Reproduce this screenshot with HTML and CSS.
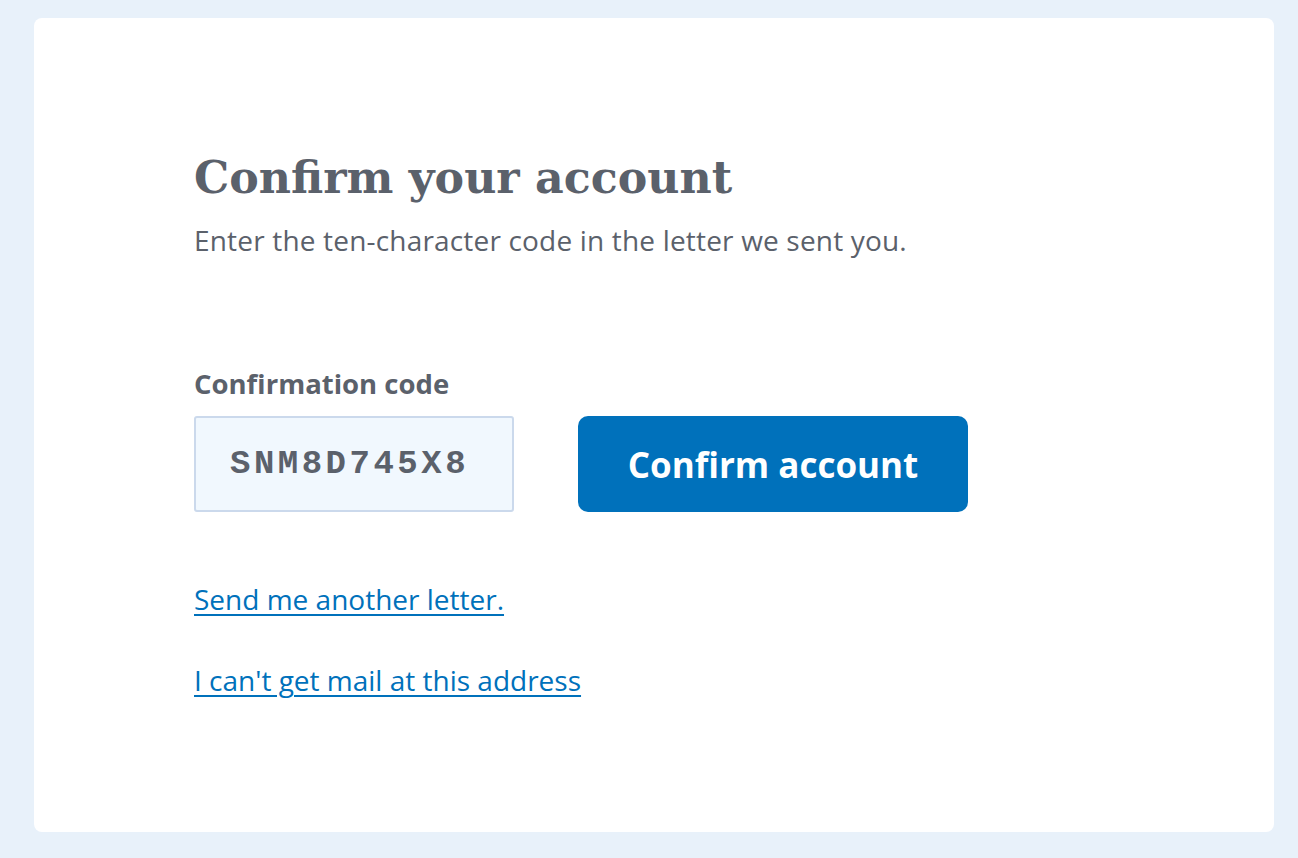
FILE: index.html
```html
<!DOCTYPE html>
<html lang="en">
<head>
<meta charset="utf-8">
<title>Confirm your account</title>
<link rel="stylesheet" href="styles.css">
</head>
<body>
<main class="card">
  <h1 class="title">Confirm your account</h1>
  <p class="lead">Enter the ten-character code in the letter we sent you.</p>
  <form class="form">
    <label class="label" for="code">Confirmation code</label>
    <div class="row">
      <input class="code" id="code" type="text" value="SNM8D745X8">
      <button class="btn" type="button">Confirm account</button>
    </div>
  </form>
  <p class="link-row"><a class="link" href="#">Send me another letter.</a></p>
  <p class="link-row"><a class="link" href="#">I can't get mail at this address</a></p>
</main>
</body>
</html>
```

FILE: styles.css
```css
html, body {
  margin: 0;
  padding: 0;
}
body {
  background: #e8f1fa;
  padding: 18px 24px 26px 34px;
  font-family: "Open Sans", "Liberation Sans", sans-serif;
  color: #5b616b;
  box-sizing: border-box;
  height: 858px;
}
.card {
  background: #ffffff;
  border-radius: 8px;
  height: 814px;
  box-sizing: border-box;
  padding: 133px 160px 0 160px;
}
.title {
  margin: 0;
  font-family: "DejaVu Serif", serif;
  font-weight: bold;
  font-size: 44.3px;
  line-height: 52px;
  color: #5b616b;
}
.lead {
  margin: 19px 0 0;
  font-size: 28px;
  line-height: 36px;
  letter-spacing: 0.18px;
}
.form {
  margin-top: 108px;
}
.label {
  display: block;
  font-weight: bold;
  font-size: 27.5px;
  line-height: 36px;
}
.row {
  display: flex;
  gap: 64px;
  margin-top: 14px;
}
.code {
  width: 320px;
  height: 96px;
  box-sizing: border-box;
  border: 2px solid #cbd9ec;
  border-radius: 3px;
  background: #f1f8fe;
  font-family: "Liberation Mono", monospace;
  font-weight: bold;
  font-size: 34px;
  letter-spacing: 3.5px;
  color: #5b616b;
  padding: 0 0 0 34px;
  outline: none;
}
.btn {
  width: 390px;
  height: 96px;
  border: none;
  border-radius: 10px;
  background: #0071bb;
  color: #ffffff;
  font-family: "Open Sans", "Liberation Sans", sans-serif;
  font-weight: bold;
  font-size: 35px;
}
.link-row {
  margin: 0;
  font-size: 28px;
  line-height: 36px;
}
.form + .link-row {
  margin-top: 69px;
}
.link-row + .link-row {
  margin-top: 45px;
}
.link {
  color: #0071bb;
  text-decoration: underline;
  text-decoration-thickness: 2px;
  text-underline-offset: 4px;
}
```
